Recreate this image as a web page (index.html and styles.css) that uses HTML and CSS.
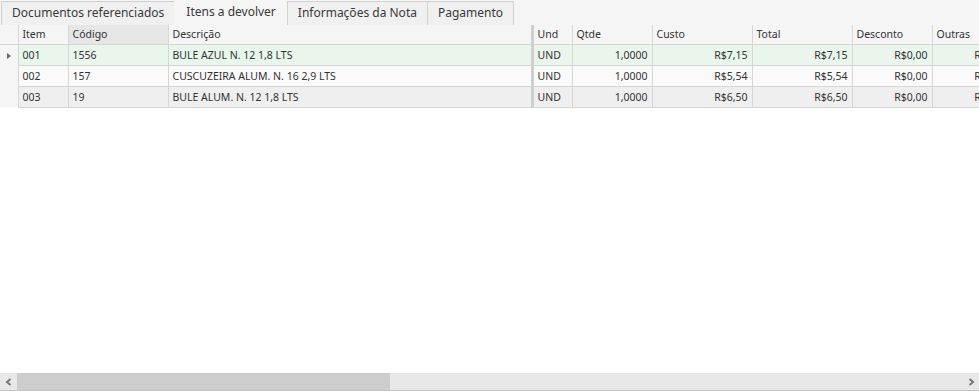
FILE: index.html
```html
<!DOCTYPE html>
<html lang="pt">
<head>
<meta charset="utf-8">
<link rel="stylesheet" href="styles.css">
</head>
<body>
<div class="app">
  <div class="tabs">
    <div class="tab">Documentos referenciados</div>
    <div class="tab active">Itens a devolver</div>
    <div class="tab">Informações da Nota</div>
    <div class="tab">Pagamento</div>
  </div>
  <div class="grid-wrap">
    <table class="grid">
      <colgroup>
        <col class="c-ind"><col class="c-item"><col class="c-cod"><col class="c-desc"><col class="c-und"><col class="c-qtde"><col class="c-custo"><col class="c-total"><col class="c-desc2"><col class="c-outras"><col class="c-rest">
      </colgroup>
      <thead>
        <tr>
          <th class="ind"></th>
          <th>Item</th>
          <th class="sorted">Código</th>
          <th class="thick">Descrição</th>
          <th>Und</th>
          <th>Qtde</th>
          <th>Custo</th>
          <th>Total</th>
          <th>Desconto</th>
          <th>Outras</th>
          <th></th>
        </tr>
      </thead>
      <tbody>
        <tr class="r1">
          <td class="ind"><span class="arrow"></span></td>
          <td>001</td><td>1556</td><td class="thick">BULE AZUL N. 12 1,8 LTS</td><td>UND</td>
          <td class="num">1,0000</td><td class="num">R$7,15</td><td class="num">R$7,15</td><td class="num">R$0,00</td><td class="num">R$0,00</td><td></td>
        </tr>
        <tr class="r2">
          <td class="ind"></td>
          <td>002</td><td>157</td><td class="thick">CUSCUZEIRA ALUM. N. 16 2,9 LTS</td><td>UND</td>
          <td class="num">1,0000</td><td class="num">R$5,54</td><td class="num">R$5,54</td><td class="num">R$0,00</td><td class="num">R$0,00</td><td></td>
        </tr>
        <tr class="r3">
          <td class="ind"></td>
          <td>003</td><td>19</td><td class="thick">BULE ALUM. N. 12 1,8 LTS</td><td>UND</td>
          <td class="num">1,0000</td><td class="num">R$6,50</td><td class="num">R$6,50</td><td class="num">R$0,00</td><td class="num">R$0,00</td><td></td>
        </tr>
      </tbody>
    </table>
  </div>
  <div class="hscroll">
    <div class="sbtn"><svg width="8" height="8" viewBox="0 0 8 8"><path d="M5.5 1 L2 4 L5.5 7" fill="none" stroke="#777" stroke-width="2"/></svg></div>
    <div class="thumb"></div>
    <div class="track"></div>
    <div class="sbtn"><svg width="8" height="8" viewBox="0 0 8 8"><path d="M2.5 1 L6 4 L2.5 7" fill="none" stroke="#777" stroke-width="2"/></svg></div>
  </div>
</div>
</body>
</html>
```

FILE: styles.css
```css
* { box-sizing: border-box; }
html, body { margin: 0; padding: 0; }
body {
  width: 979px;
  height: 391px;
  overflow: hidden;
  background: #fff;
  font-family: "Noto Sans", "DejaVu Sans", sans-serif;
  color: #333;
}
.app {
  display: flex;
  flex-direction: column;
  height: 391px;
}
.tabs {
  display: flex;
  align-items: flex-end;
  height: 25px;
  padding-left: 1px;
  background: #f5f5f5;
  flex: none;
}
.tab {
  height: 24px;
  padding: 0 10px;
  font-size: 12px;
  line-height: 22px;
  color: #3a3a3a;
  border: 1px solid #cfcfcf;
  border-bottom: none;
  background: #f0f0f0;
  margin-right: -1px;
}
.tab.active {
  height: 25px;
  background: #f5f5f5;
  border-color: transparent;
  padding: 0 11px;
  line-height: 22px;
}
.grid-wrap {
  flex: 1;
  overflow: hidden;
  background: #fff;
}
.grid {
  border-collapse: collapse;
  table-layout: fixed;
  width: 1062px;
  font-size: 10.5px;
}
.c-ind { width: 18px; }
.c-item { width: 50px; }
.c-cod { width: 100px; }
.c-desc { width: 364px; }
.c-und { width: 40px; }
.c-qtde { width: 80px; }
.c-custo { width: 100px; }
.c-total { width: 100px; }
.c-desc2 { width: 80px; }
.c-outras { width: 80px; }
.c-rest { width: 50px; }
.grid th {
  height: 19px;
  text-align: left;
  font-weight: normal;
  padding: 0 4px;
  background: #f5f5f5;
  border: 1px solid #d6d6d6;
  border-top: none;
  color: #333;
  white-space: nowrap;
}
.grid th.sorted { background: #e6e6e6; }
.grid td {
  height: 21px;
  padding: 0 4px;
  border: 1px solid #d6d6d6;
  white-space: nowrap;
  overflow: hidden;
}
.grid .thick { border-right: 3px solid #cfcfcf; }
.grid td.num { text-align: right; }
.grid th.ind, .grid td.ind {
  background: #f5f5f5;
  border-left: none;
  border-top: none;
  border-bottom: none;
  border-right: 1px solid #d6d6d6;
  padding: 0;
  text-align: center;
}
.grid th.ind { border-bottom: 1px solid #d6d6d6; }
.r1 td { background: #e8f6ec; }
.r2 td { background: #fafafa; }
.r3 td { background: #efefef; }
.arrow {
  display: inline-block;
  width: 0; height: 0;
  border-top: 3.5px solid transparent;
  border-bottom: 3.5px solid transparent;
  border-left: 4px solid #666;
  vertical-align: middle;
}
.hscroll {
  flex: none;
  display: flex;
  height: 18px;
  background: #e8e8e8;
  border-bottom: 1px solid #c4c4c4;
}
.sbtn {
  width: 17px;
  display: flex;
  align-items: center;
  justify-content: center;
  background: #e8e8e8;
}
.thumb { width: 373px; background: #cdcdcd; }
.track { flex: 1; }
```
